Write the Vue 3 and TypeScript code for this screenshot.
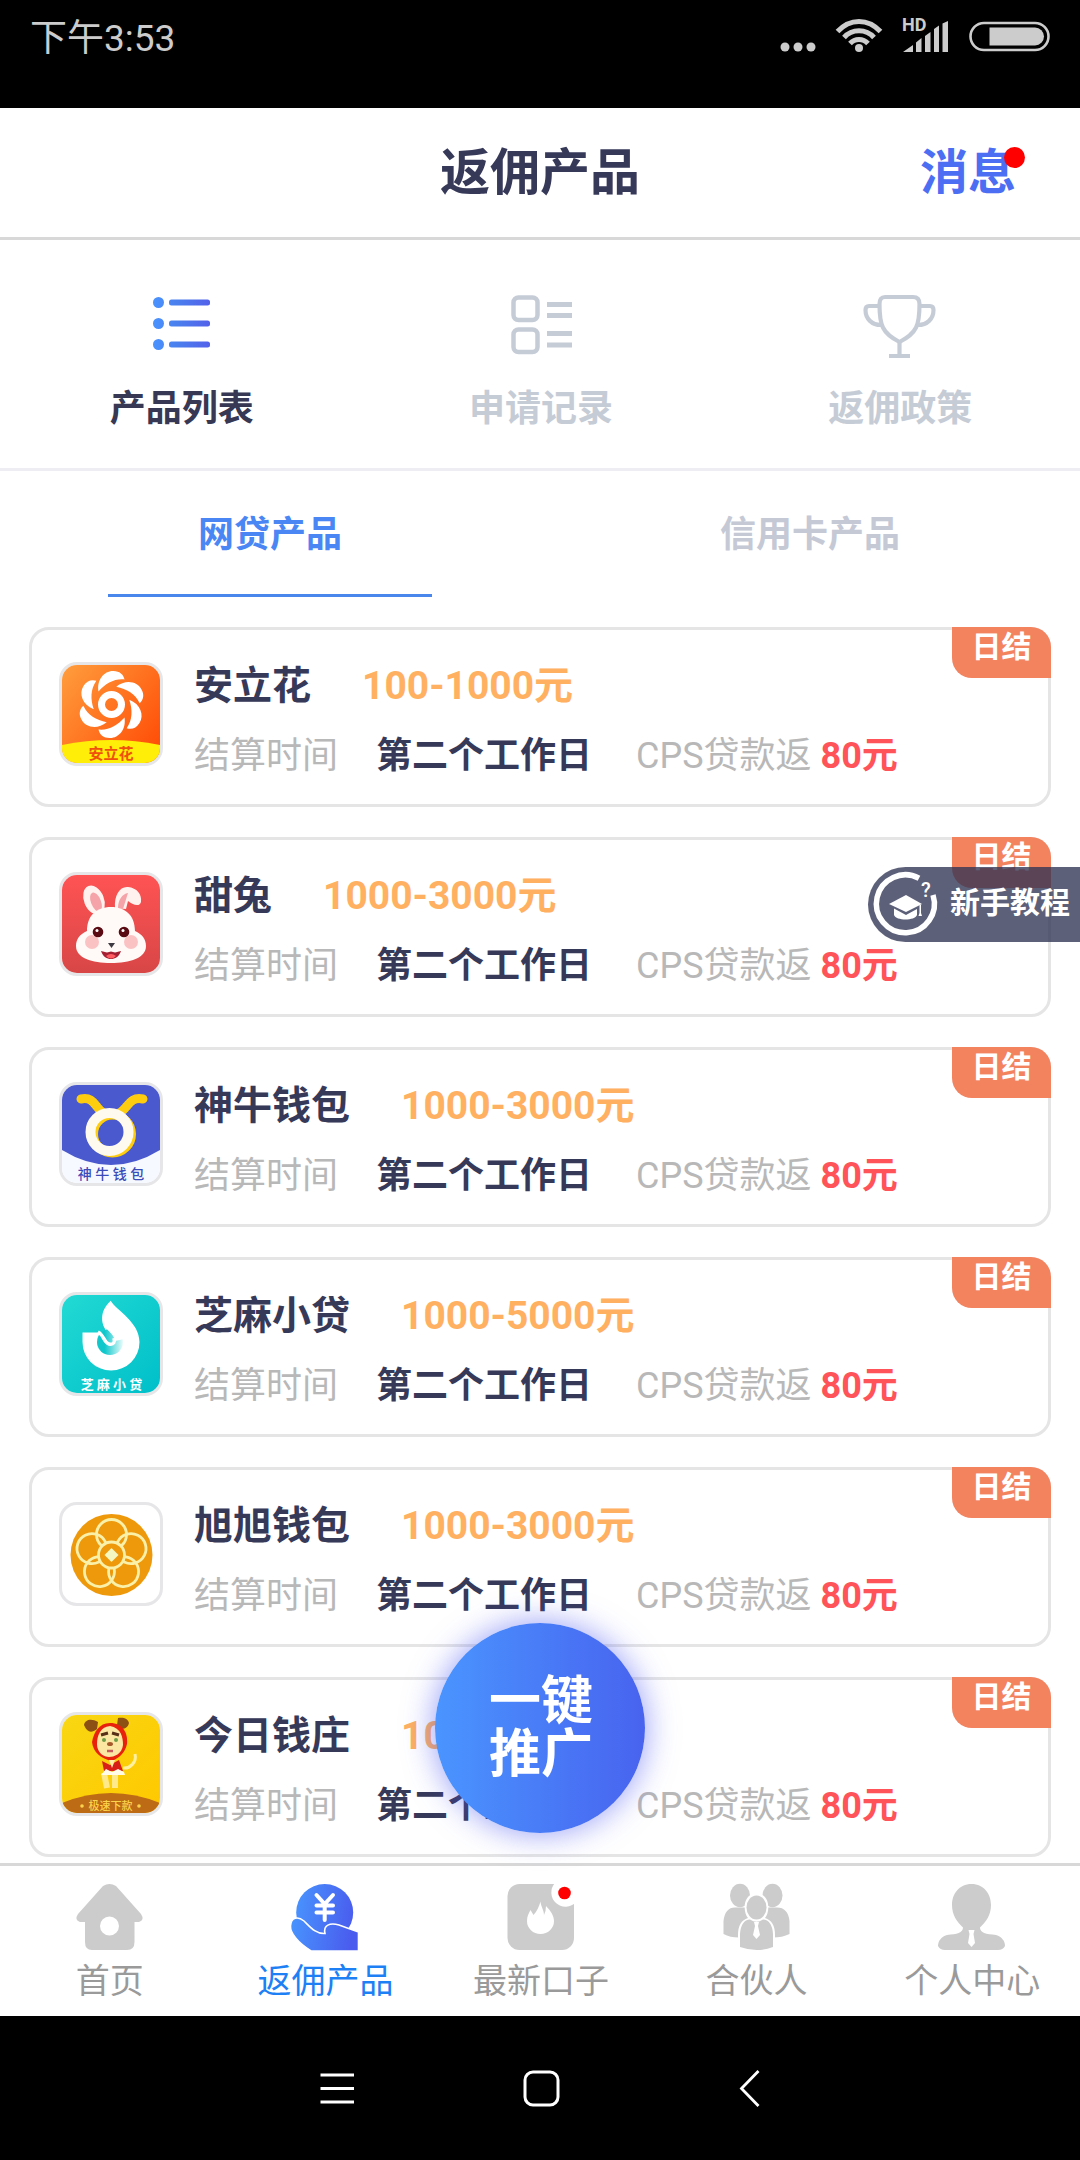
<script setup lang="ts">
import { ref } from 'vue'

type Logo = 'flower' | 'rabbit' | 'bull' | 'sesame' | 'coin' | 'dog'
type NavIcon = 'home' | 'rebate' | 'latest' | 'partner' | 'user'

interface Product {
  name: string
  amount: string
  logo: Logo
}

const products: Product[] = [
  { name: '安立花', amount: '100-1000元', logo: 'flower' },
  { name: '甜兔', amount: '1000-3000元', logo: 'rabbit' },
  { name: '神牛钱包', amount: '1000-3000元', logo: 'bull' },
  { name: '芝麻小贷', amount: '1000-5000元', logo: 'sesame' },
  { name: '旭旭钱包', amount: '1000-3000元', logo: 'coin' },
  { name: '今日钱庄', amount: '1000-3000元', logo: 'dog' },
]

const sections = ['产品列表', '申请记录', '返佣政策']
const activeSection = ref(0)

const tabs = ['网贷产品', '信用卡产品']
const activeTab = ref(0)

const navItems: { label: string; icon: NavIcon }[] = [
  { label: '首页', icon: 'home' },
  { label: '返佣产品', icon: 'rebate' },
  { label: '最新口子', icon: 'latest' },
  { label: '合伙人', icon: 'partner' },
  { label: '个人中心', icon: 'user' },
]
const activeNav: NavIcon = 'rebate'

const petals = [0, 60, 120, 180, 240, 300]
const rings = [0, 72, 144, 216, 288]
</script>

<template>
  <div class="page">
    <div class="status">
      <span class="time">下午3:53</span>
      <div class="status-icons">
        <svg width="36" height="34" viewBox="0 0 36 34" fill="#ccc">
          <circle cx="5" cy="28" r="4.5" /><circle cx="18" cy="28" r="4.5" /><circle cx="31" cy="28" r="4.5" />
        </svg>
        <svg width="47" height="34" viewBox="0 0 47 34" fill="none" stroke="#ccc" stroke-width="5">
          <path d="M1.5 12.5C14-1 32-1 44.500 12.500" />
          <path d="M8 18.500C16 9.500 30 9.500 38 18.500" />
          <path d="M14 24.500C19 19 27 19 32 24.500" />
          <circle cx="23" cy="29" r="4" fill="#ccc" stroke="none" />
        </svg>
        <svg width="46" height="34" viewBox="0 0 46 34" fill="#ccc">
          <path d="M0 33L10 26V33ZM13 23.500L18.500 19V33H13ZM22 17L27.500 13V33H22ZM31 10L36 6.500V33H31ZM39.500 4.500L45 2V33H39.500Z" />
          <text x="-1" y="12" font-family="Roboto" font-size="18" font-weight="700">HD</text>
        </svg>
        <svg width="81" height="34" viewBox="0 0 81 34">
          <rect x="1.500" y="4" width="78" height="27" rx="13.500" fill="none" stroke="#ccc" stroke-width="2.600" />
          <path d="M20.500 8.500H66A9 9 0 0 1 66 26.500H20.500Z" fill="#ccc" />
        </svg>
      </div>
    </div>

    <header class="header">
      <h1>返佣产品</h1>
      <button type="button" class="message">消息<i class="dot"></i></button>
    </header>

    <nav class="sections">
      <button
        v-for="(section, index) in sections"
        :key="section"
        type="button"
        class="section"
        :class="{ active: index === activeSection }"
        @click="activeSection = index"
      >
        <svg v-if="index === 0" width="72" height="66" viewBox="0 0 72 66">
          <defs>
            <linearGradient id="line-fill" gradientUnits="userSpaceOnUse" x1="7" y1="0" x2="65" y2="0">
              <stop offset="0" stop-color="#4a93ff" />
              <stop offset="0.400" stop-color="#4a80ee" />
              <stop offset="1" stop-color="#5360ea" />
            </linearGradient>
          </defs>
          <g fill="url(#line-fill)">
            <circle cx="12.500" cy="9.500" r="5.500" /><circle cx="12.500" cy="30.500" r="5.500" /><circle cx="12.500" cy="51.500" r="5.500" />
            <rect x="23" y="6.500" width="41" height="6" rx="2.500" /><rect x="23" y="27.500" width="41" height="6" rx="2.500" /><rect x="23" y="48.500" width="41" height="6" rx="2.500" />
          </g>
        </svg>
        <svg v-else-if="index === 1" width="72" height="66" viewBox="0 0 72 66" fill="none" stroke="#c6ccd6" stroke-width="4.500">
          <rect x="8.500" y="4.500" width="24" height="22.500" rx="5" /><rect x="8.500" y="36.500" width="24" height="22.500" rx="5" />
          <path d="M42 11.500H67M42 22.500H67M42 40.500H67M42 52H67" stroke-width="5" />
        </svg>
        <svg v-else width="72" height="66" viewBox="0 0 72 66" fill="none" stroke="#c6ccd6" stroke-width="4.200">
          <path d="M21 4H49Q55.500 4 55.500 11C55.500 32 53 40 35.500 49C18 40 15.500 32 15.500 11Q15.500 4 21 4Z" />
          <path d="M15.500 13H5Q1.500 13 1.500 17C1.500 26 8 32 17 32M55.500 13H66Q69.500 13 69.500 17C69.500 26 63 32 54 32" />
          <path d="M35.500 49V63M25 63H46" />
        </svg>
        <span>{{ section }}</span>
      </button>
    </nav>

    <nav class="tabs">
      <button
        v-for="(tab, index) in tabs"
        :key="tab"
        type="button"
        class="tab"
        :class="{ active: index === activeTab }"
        @click="activeTab = index"
      >
        {{ tab }}
      </button>
    </nav>

    <main class="content">
      <ul class="list">
        <li v-for="product in products" :key="product.name" class="card">
          <div class="logo">
            <svg v-if="product.logo === 'flower'" viewBox="0 0 98 98">
              <defs>
                <linearGradient id="flower-bg" x1="0" y1="0" x2="1" y2="0.800">
                  <stop offset="0" stop-color="#ff9e3d" />
                  <stop offset="1" stop-color="#ff4e08" />
                </linearGradient>
              </defs>
              <rect width="98" height="98" fill="url(#flower-bg)" />
              <path d="M0 80Q49 70 98 80V98H0Z" fill="#ffee08" />
              <g transform="translate(49.500 39.500)" fill="#fff">
                <path v-for="angle in petals" :key="angle" :transform="`rotate(${angle})`" d="M-13-13C-15-25-7-34 2-33.500C8-33.500 12-30 13-25C3-26-6-21-13-13Z" />
                <circle r="10" fill="none" stroke="#fff" stroke-width="7" />
              </g>
              <text x="49" y="94" text-anchor="middle" font-size="15" font-weight="700" fill="#f0500c">安立花</text>
            </svg>

            <svg v-else-if="product.logo === 'rabbit'" viewBox="0 0 98 98">
              <defs>
                <linearGradient id="rabbit-bg" x1="0" y1="0" x2="0" y2="1">
                  <stop offset="0" stop-color="#ff5354" />
                  <stop offset="1" stop-color="#d84646" />
                </linearGradient>
              </defs>
              <rect width="98" height="98" fill="url(#rabbit-bg)" />
              <ellipse cx="32" cy="25" rx="10" ry="15" transform="rotate(-22 32 25)" fill="#fff2ee" />
              <ellipse cx="34" cy="27" rx="5" ry="10" transform="rotate(-22 34 27)" fill="#f5a3a8" />
              <path d="M53 33C52 20 58 11 66 12C75 13 80 19 79 27C77 33 70 29 66 26L64 34Z" fill="#fff2ee" />
              <path d="M56 33C56 25 60 19 66 18L61 34Z" fill="#f5a3a8" />
              <path d="M49 32C64 32 73 41 73 56C80 59 84 64 84 71C84 83 68 88 49 88S14 83 14 71C14 64 18 59 25 56C25 41 34 32 49 32Z" fill="#fffaf7" />
              <circle cx="30" cy="67" r="7" fill="#fbc2c4" /><circle cx="69" cy="67" r="7" fill="#fbc2c4" />
              <circle cx="36" cy="57" r="5.300" fill="#5a0a12" /><circle cx="62" cy="57" r="5.300" fill="#5a0a12" />
              <circle cx="35" cy="55.500" r="1.500" fill="#fff" /><circle cx="61" cy="55.500" r="1.500" fill="#fff" />
              <path d="M46 68H53L49.500 73Z" fill="#3d3a42" />
              <path d="M39 76L45 77.500L49 76.500L53 77.500L59 76C57 82 53 84 49 84S41 82 39 76Z" fill="#a52032" />
              <path d="M44 81Q49 77 54 81Q49 86 44 81Z" fill="#ff5c62" />
            </svg>

            <svg v-else-if="product.logo === 'bull'" viewBox="0 0 98 98">
              <rect width="98" height="98" fill="#f6f9ff" />
              <path d="M0 0H98V65Q49 95 0 65Z" fill="#4a59ce" />
              <path d="M19 14C33 11 33 24 42 28M81 14C67 11 66 24 57 28" fill="none" stroke="#ffcd10" stroke-width="9" stroke-linecap="round" />
              <circle cx="50.500" cy="49" r="19" fill="none" stroke="#ffcd10" stroke-width="9" />
              <circle cx="47.500" cy="47" r="19" fill="none" stroke="#fffaf0" stroke-width="10" />
              <text x="49" y="94" text-anchor="middle" font-size="14" font-weight="500" fill="#3b4bb8">神 牛 钱 包</text>
            </svg>

            <svg v-else-if="product.logo === 'sesame'" viewBox="0 0 98 98">
              <defs>
                <linearGradient id="sesame-bg" x1="0" y1="0" x2="1" y2="1">
                  <stop offset="0" stop-color="#22dad4" />
                  <stop offset="1" stop-color="#00bfc9" />
                </linearGradient>
                <linearGradient id="sesame-shell" x1="0" y1="0" x2="1" y2="0">
                  <stop offset="0.300" stop-color="#10c8cc" />
                  <stop offset="1" stop-color="#e9fbfb" />
                </linearGradient>
              </defs>
              <rect width="98" height="98" fill="url(#sesame-bg)" />
              <path d="M48.700 5.700C55 16 77.500 27 77.500 47A28.500 28.500 0 0 1 20.500 47V37.500H37L46 38C40 31 39 24 41 17Q43 11 48.700 5.700Z" fill="#fff" />
              <circle cx="48" cy="47" r="13" fill="url(#sesame-shell)" />
              <path d="M41 28C44 36 52 38 53 46L62 44L60 30Z" fill="#fff" />
              <path d="M36 37C42 40 42 48 47 49S53 47 52 43" fill="none" stroke="#fff" stroke-width="3.500" />
              <text x="49.500" y="94" text-anchor="middle" font-size="13" font-weight="700" fill="#fff">芝 麻 小 贷</text>
            </svg>

            <svg v-else-if="product.logo === 'coin'" viewBox="0 0 98 98">
              <circle cx="49.500" cy="50" r="41" fill="#ee990c" />
              <g transform="translate(49.500 50)" fill="none" stroke="#faf0a8" stroke-width="2.800">
                <circle v-for="angle in rings" :key="angle" :transform="`rotate(${angle})`" cy="-20.500" r="15" />
                <circle r="13" fill="#ee990c" />
                <path d="M0-7L7 0L0 7L-7 0Z" fill="#f4f8c0" stroke="none" />
              </g>
            </svg>

            <svg v-else viewBox="0 0 98 98">
              <defs>
                <linearGradient id="dog-bg" x1="0" y1="0" x2="1" y2="1">
                  <stop offset="0" stop-color="#f8d712" />
                  <stop offset="1" stop-color="#ffc800" />
                </linearGradient>
              </defs>
              <rect width="98" height="98" fill="url(#dog-bg)" />
              <path d="M0 88Q49 68 98 88V98H0Z" fill="#bd6b14" />
              <path d="M35 14C29 19 25 17 22 10C23 5 29 3 36 7ZM55 10L56 3C61 2 66 3 67 8C66 13 61 15 57 13Z" fill="#8c5014" />
              <path d="M61 53C68 54 75 47 73 39" fill="none" stroke="#fff0a0" stroke-width="3" />
              <path d="M42 58L45 73M53 58L53 73" stroke="#ffe989" stroke-width="6" />
              <path d="M48 8C61 8 66 18 65 29C63 38 57 43 50 46C39 44 31 37 30 27C32 17 37 8 48 8Z" fill="#e8210c" />
              <path d="M48 11C59 13 61 22 61 30C60 39 52 42 47 42S35 38 35 29C35 21 38 12 48 11Z" fill="#fbe7a2" />
              <path d="M39 20L46 18M50 18L57 20" stroke="#583018" stroke-width="3" />
              <circle cx="42" cy="25" r="2" fill="#6f9c47" /><circle cx="54" cy="25" r="2" fill="#6f9c47" />
              <ellipse cx="48" cy="29" rx="3" ry="2" fill="#a65a2c" />
              <path d="M45 36H51" stroke="#c75a5a" stroke-width="2.500" />
              <path d="M40 46L48 50L57 45L61 56H42Z" fill="#d92018" />
              <path d="M47 45L50 53L53 45Z" fill="#fff0b0" />
              <path d="M39 60L44 54L50 57L56 54L62 57L63 60Z" fill="#fffbe8" />
              <text x="48.500" y="95" text-anchor="middle" font-size="11" font-weight="500" fill="#fbd24c">极速下款</text>
              <circle cx="20" cy="91" r="1.800" fill="#fbd24c" /><circle cx="77" cy="91" r="1.800" fill="#fbd24c" />
            </svg>
          </div>
          <div class="info">
            <div class="headline">
              <h2>{{ product.name }}</h2>
              <span class="amount">{{ product.amount }}</span>
            </div>
            <div class="details">
              <span class="label">结算时间</span>
              <strong class="period">第二个工作日</strong>
              <span class="label">CPS贷款返 <strong class="reward">80元</strong></span>
            </div>
          </div>
          <span class="badge">日结</span>
        </li>
      </ul>

      <button type="button" class="guide">
        <svg width="64" height="64" viewBox="0 0 64 64">
          <path d="M45 5.200A29 29 0 1 0 59 22" fill="none" stroke="#fff" stroke-width="5.500" />
          <path d="M32 22L48 31L32 39L15 31Z" fill="#fff" />
          <path d="M20 35.500L32 42L43 36V42C41 48 22 48 20 42ZM45.500 32H47V40L48 43H44.500L45.500 40Z" fill="#fff" />
          <text x="47" y="24" font-family="Roboto" font-size="20" font-weight="500" fill="#fff">?</text>
        </svg>
        <span>新手教程</span>
      </button>

      <button type="button" class="promote">一键<br />推广</button>
    </main>

    <nav class="bottom-nav">
      <a v-for="item in navItems" :key="item.icon" href="#" class="nav-item" :class="{ active: item.icon === activeNav }">
        <svg width="70" height="68" viewBox="1 0 70 68" fill="#ccc">
          <g v-if="item.icon === 'home'">
            <path fill-rule="evenodd" d="M29 3Q35.500-1 42 3L67 31Q71 37 65 39H60.500V59Q60.500 67 53 67H18Q11 67 11 59V39H6Q0 37 4 31ZM35.500 33.500A9.500 9.500 0 1 0 35.500 52.500A9.500 9.500 0 1 0 35.500 33.500Z" />
          </g>
          <g v-else-if="item.icon === 'rebate'">
            <defs>
              <linearGradient id="rebate-fill" gradientUnits="userSpaceOnUse" x1="3" y1="0" x2="69" y2="10">
                <stop offset="0" stop-color="#4898ff" />
                <stop offset="1" stop-color="#4a5cee" />
              </linearGradient>
            </defs>
            <circle cx="35.700" cy="29.500" r="28.500" fill="url(#rebate-fill)" />
            <path d="M1.500 43C2 34 9 33 15 38C22 45 27 51 36 50.500C34 42 41 39.500 50 42L69.500 49V68H22C9 60 1 50 1.500 43Z" fill="url(#rebate-fill)" stroke="#fff" stroke-width="1.600" />
            <path d="M27.500 12L35.700 21L44 12M35.700 20V37M27.500 22.500H44M27.500 29.500H44" fill="none" stroke="#fff" stroke-width="4" stroke-linecap="round" />
          </g>
          <g v-else-if="item.icon === 'latest'">
            <rect x="2.500" y="1" width="66.500" height="66" rx="12" />
            <path d="M35.500 18.500C36 24 39 27 39 32Q41 28 41 23C46 28 49 33 49 38A13.500 13 0 0 1 22 38C22 33 24 30 25.500 27L28.500 32C32 28 34 24 35.500 18.500Z" fill="#fff" />
            <path d="M50 0A13.500 13.500 0 1 0 71 19V0Z" fill="#fff" />
            <circle cx="59.500" cy="10" r="6.300" fill="#f00" />
          </g>
          <g v-else-if="item.icon === 'partner'">
            <ellipse cx="19" cy="12.500" rx="10" ry="11.800" /><ellipse cx="51.500" cy="12.500" rx="10" ry="11.800" />
            <path d="M2.500 38Q4 24.500 14 24.500H56Q67 24.500 68.500 38V51Q60 55 50 54.500H20Q10 55 2.500 51Z" />
            <path d="M35.500 10.500C50 10.500 49 30 44 35Q54 38 54 52V69H17V52Q17 38 27 35C22 30 21 10.500 35.500 10.500Z" fill="#fff" />
            <ellipse cx="35.500" cy="24.500" rx="10" ry="12" />
            <path d="M19 64V51Q20 37 29 36.500Q35.500 41 42 36.500Q51 37 52 51V64Q36 70 19 64Z" />
            <path d="M33 39H38L37 43L39 52L35.500 56L32 52L34 43Z" fill="#fff" />
          </g>
          <g v-else>
            <path d="M35.500 1C48 1 55 11 55 22C55 32 50 39 44 44.500C44 50 50 51 60 52C66 54 69 58 69 63Q67 67 62 67H9Q4 67 2 63C2 58 5 54 11 52C21 51 27 50 27 44.500C21 39 16 32 16 22C16 11 23 1 35.500 1Z" />
            <path d="M32.500 47H38.500L37.500 51L39 60L35.500 64L32 60L33.500 51Z" fill="#fff" />
          </g>
        </svg>
        <span>{{ item.label }}</span>
      </a>
    </nav>

    <div class="system-nav">
      <button type="button" aria-label="菜单">
        <svg width="40" height="40" viewBox="0 0 40 40" fill="none" stroke="#fff" stroke-width="2.800"><path d="M4.500 7H38M4.500 20.500H38M4.500 34H38" /></svg>
      </button>
      <button type="button" aria-label="主页">
        <svg width="40" height="40" viewBox="0 0 40 40" fill="none" stroke="#fff" stroke-width="3"><rect x="5" y="4" width="33" height="33" rx="8" /></svg>
      </button>
      <button type="button" aria-label="返回">
        <svg width="40" height="40" viewBox="0 0 40 40" fill="none" stroke="#fff" stroke-width="2.800"><path d="M34.500 3L17.500 20.500L34.500 38" /></svg>
      </button>
    </div>
  </div>
</template>

<style>
body {
  margin: 0;
  background: #000;
}
</style>

<style scoped>
.page {
  display: flex;
  flex-direction: column;
  min-height: 100vh;
  background: #fff;
  color: #373959;
  font-family: Roboto, "Noto Sans CJK SC", sans-serif;
}

button {
  margin: 0;
  padding: 0;
  border: 0;
  background: none;
  color: inherit;
  font: inherit;
  cursor: pointer;
}

svg {
  display: block;
  overflow: visible;
}

h1,
h2 {
  margin: 0;
  font-weight: 700;
}

.status {
  display: flex;
  justify-content: space-between;
  align-items: flex-start;
  box-sizing: border-box;
  height: 108px;
  padding: 19px 30px;
  background: #000;
  color: #ccc;
}

.time {
  font-size: 37px;
  line-height: 40px;
}

.status-icons {
  display: flex;
  gap: 20px;
}

.header {
  display: grid;
  grid-template-columns: 1fr auto 1fr;
  align-items: center;
  box-sizing: border-box;
  height: 132px;
  padding: 0 64px;
  border-bottom: 3px solid #d8d8d8;
}

h1 {
  grid-column: 2;
  font-size: 50px;
  line-height: 60px;
}

.message {
  position: relative;
  justify-self: end;
  color: #4c6ef2;
  font-size: 48px;
  font-weight: 700;
  line-height: 60px;
}

.dot {
  position: absolute;
  top: 4px;
  right: -9px;
  width: 21px;
  height: 21px;
  border-radius: 50%;
  background: #f00;
}

.sections {
  display: flex;
  padding: 53px 0 35px 2px;
  border-bottom: 3px solid #ededf3;
}

.section {
  display: flex;
  flex: 1;
  flex-direction: column;
  align-items: center;
  gap: 26px;
  color: #c6ccd6;
  font-size: 36px;
  font-weight: 700;
  line-height: 48px;
}

.section.active {
  color: #373853;
}

.tabs {
  display: flex;
}

.tab {
  position: relative;
  flex: 1;
  height: 126px;
  padding-bottom: 6px;
  color: #c5c9d6;
  font-size: 36px;
  font-weight: 700;
}

.tab.active {
  color: #4a87f5;
}

.tab.active::after {
  content: "";
  position: absolute;
  right: 20%;
  bottom: 0;
  left: 20%;
  height: 3px;
  background: #4a87ec;
}

.content {
  position: relative;
  flex: 1;
  padding: 30px 29px 6px;
}

.list {
  display: flex;
  flex-direction: column;
  gap: 30px;
  margin: 0;
  padding: 0;
  list-style: none;
}

.card {
  position: relative;
  display: flex;
  gap: 31px;
  box-sizing: border-box;
  height: 180px;
  padding: 32px 27px;
  border: 3px solid #e5e5e5;
  border-radius: 20px;
}

.logo {
  flex: none;
  width: 98px;
  height: 98px;
  border: 3px solid #e6e6e8;
  border-radius: 18px;
  overflow: hidden;
}

.info {
  display: flex;
  flex-direction: column;
  gap: 22px;
}

.headline {
  display: flex;
  gap: 51px;
  font-size: 39px;
  line-height: 48px;
}

h2 {
  font-size: 39px;
}

.amount {
  color: #ffb061;
  font-weight: 700;
}

.details {
  display: flex;
  font-size: 36px;
  line-height: 48px;
  white-space: nowrap;
}

.label {
  color: #b8b8b8;
  font-weight: 400;
}

.period {
  margin: 0 44px 0 38px;
  font-weight: 700;
}

.reward {
  color: #ff5259;
  font-weight: 700;
}

.badge {
  position: absolute;
  top: -3px;
  right: -3px;
  width: 99px;
  height: 51px;
  border-radius: 0 20px 0 20px;
  background: #f3825f;
  color: #fff;
  font-size: 30px;
  font-weight: 700;
  line-height: 40px;
  text-align: center;
}

.guide {
  position: absolute;
  top: 270px;
  right: 0;
  display: flex;
  align-items: center;
  gap: 12px;
  height: 75px;
  padding: 0 10px 0 6px;
  border-radius: 38px 0 0 38px;
  background: rgba(47, 51, 83, 0.78);
  color: #fff;
  font-size: 30px;
  font-weight: 700;
  line-height: 40px;
}

.guide span {
  padding-bottom: 3px;
}

.promote {
  position: absolute;
  bottom: 30px;
  left: 50%;
  width: 210px;
  height: 210px;
  padding-left: 2px;
  border-radius: 50%;
  background: linear-gradient(90deg, #4a95ff, #4863ef);
  box-shadow: 0 0 32px rgba(76, 86, 240, 0.6);
  color: #fff;
  font-size: 52px;
  font-weight: 700;
  line-height: 53px;
  transform: translateX(-50%);
}

.bottom-nav {
  display: flex;
  padding: 17px 0 15px 2px;
  border-top: 3px solid #d8d8d8;
  background: #fff;
}

.nav-item {
  display: flex;
  flex: 1;
  flex-direction: column;
  align-items: center;
  gap: 10px;
  color: #9a9a9a;
  font-size: 34px;
  font-weight: 400;
  line-height: 40px;
  text-decoration: none;
}

.nav-item.active {
  color: #1e80f5;
}

.system-nav {
  display: flex;
  justify-content: center;
  align-items: center;
  gap: 164px;
  height: 144px;
  background: #000;
}
</style>
